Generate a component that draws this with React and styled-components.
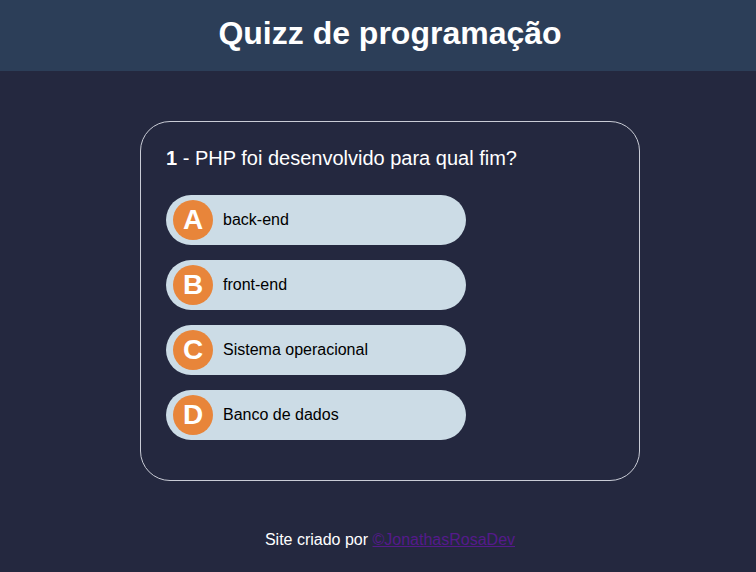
import React from 'react';
import styled, { createGlobalStyle } from 'styled-components';

const GlobalStyle = createGlobalStyle`
  html, body {
    margin: 0;
    padding: 0;
    background-color: #24283f;
    font-family: "Liberation Sans", Arial, sans-serif;
    overflow-x: hidden;
  }
`;

const Header = styled.header`
  height: 71px;
  box-sizing: border-box;
  background-color: #2c3e58;
  display: flex;
  align-items: center;
  justify-content: center;
  padding: 0 0 4px 24px;
`;

const Title = styled.h1`
  margin: 0;
  color: #fff;
  font-size: 32px;
  font-weight: bold;
`;

const Main = styled.main`
  display: flex;
  justify-content: center;
  padding: 50px 0 0 24px;
`;

const Card = styled.section`
  width: 500px;
  height: 360px;
  box-sizing: border-box;
  border: 1px solid #c9ccd6;
  border-radius: 30px;
  padding: 25px 25px 40px;
  display: flex;
  flex-direction: column;
`;

const Question = styled.h2`
  margin: 0 0 25px;
  color: #fff;
  font-size: 20px;
  font-weight: normal;
  line-height: 23px;

  b {
    font-weight: bold;
  }
`;

const Options = styled.div`
  display: flex;
  flex-direction: column;
  gap: 15px;
`;

const Option = styled.button`
  width: 300px;
  height: 50px;
  border: none;
  border-radius: 25px;
  background-color: #ccdce6;
  display: flex;
  align-items: center;
  gap: 10px;
  padding: 0 7px;
  font-family: inherit;
  font-size: 16px;
  color: #000;
  cursor: pointer;
  text-align: left;
`;

const Letter = styled.span`
  width: 40px;
  height: 40px;
  border-radius: 50%;
  background-color: #e8853a;
  color: #fff;
  font-size: 28px;
  font-weight: bold;
  display: flex;
  align-items: center;
  justify-content: center;
  flex-shrink: 0;
`;

const Footer = styled.footer`
  margin-top: 50px;
  padding-left: 24px;
  text-align: center;
  color: #fff;
  font-size: 16px;

  a {
    color: #551a8b;
  }
`;

const options = [
  { letter: 'A', text: 'back-end' },
  { letter: 'B', text: 'front-end' },
  { letter: 'C', text: 'Sistema operacional' },
  { letter: 'D', text: 'Banco de dados' },
];

export default function App() {
  return (
    <>
      <GlobalStyle />
      <Header>
        <Title>Quizz de programação</Title>
      </Header>
      <Main>
        <Card>
          <Question><b>1</b> - PHP foi desenvolvido para qual fim?</Question>
          <Options>
            {options.map((o) => (
              <Option key={o.letter}>
                <Letter>{o.letter}</Letter>
                {o.text}
              </Option>
            ))}
          </Options>
        </Card>
      </Main>
      <Footer>
        Site criado por <a href="#">©JonathasRosaDev</a>
      </Footer>
    </>
  );
}
